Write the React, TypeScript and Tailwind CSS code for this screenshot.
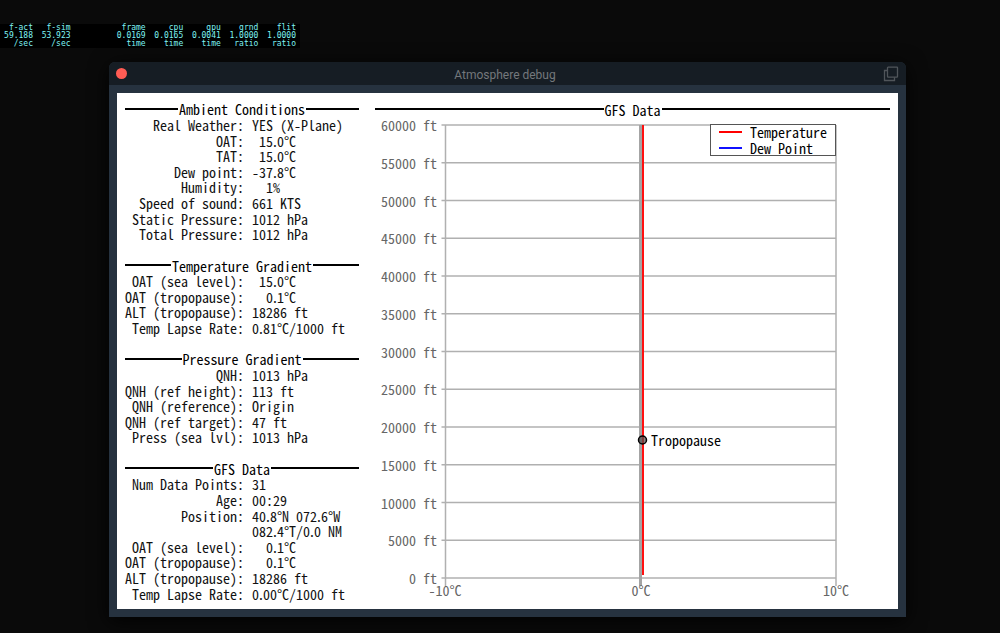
import { Fragment } from 'react';

type Row = [label: string, value: string];

interface Section {
  title: string;
  rows: Row[];
}

const MONO = "font-['Noto_Sans_Mono_CJK_JP','Liberation_Mono',monospace]";

const sections: Section[] = [
  {
    title: 'Ambient Conditions',
    rows: [
      ['Real Weather:', 'YES (X-Plane)'],
      ['OAT:', ' 15.0°C'],
      ['TAT:', ' 15.0°C'],
      ['Dew point:', '-37.8°C'],
      ['Humidity:', '  1%'],
      ['Speed of sound:', '661 KTS'],
      ['Static Pressure:', '1012 hPa'],
      ['Total Pressure:', '1012 hPa'],
    ],
  },
  {
    title: 'Temperature Gradient',
    rows: [
      ['OAT (sea level):', ' 15.0°C'],
      ['OAT (tropopause):', '  0.1°C'],
      ['ALT (tropopause):', '18286 ft'],
      ['Temp Lapse Rate:', '0.81°C/1000 ft'],
    ],
  },
  {
    title: 'Pressure Gradient',
    rows: [
      ['QNH:', '1013 hPa'],
      ['QNH (ref height):', '113 ft'],
      ['QNH (reference):', 'Origin'],
      ['QNH (ref target):', '47 ft'],
      ['Press (sea lvl):', '1013 hPa'],
    ],
  },
  {
    title: 'GFS Data',
    rows: [
      ['Num Data Points:', '31'],
      ['Age:', '00:29'],
      ['Position:', '40.8°N 072.6°W'],
      ['', '082.4°T/0.0 NM'],
      ['OAT (sea level):', '  0.1°C'],
      ['OAT (tropopause):', '  0.1°C'],
      ['ALT (tropopause):', '18286 ft'],
      ['Temp Lapse Rate:', '0.00°C/1000 ft'],
    ],
  },
];

const counters = [
  ['f-act', '59.188', '/sec'],
  ['f-sim', '53.923', '/sec'],
  ['', '', ''],
  ['frame', '0.0169', 'time'],
  ['cpu', '0.0165', 'time'],
  ['gpu', '0.0041', 'time'],
  ['grnd', '1.0000', 'ratio'],
  ['flit', '1.0000', 'ratio'],
];

function FrameCounters() {
  return (
    <div className="w-[300px] bg-black pr-1">
      <table className="w-full table-fixed border-collapse text-right font-['DejaVu_Sans_Mono',monospace] text-[8px] leading-[8px] text-[#7ff4f4]">
        <thead>
          <tr>
            {counters.map((c, i) => (
              <th key={i} className="p-0 font-normal first:w-[33px]">{c[0]}</th>
            ))}
          </tr>
        </thead>
        <tbody>
          {[1, 2].map((r) => (
            <tr key={r}>
              {counters.map((c, i) => (
                <td key={i} className="p-0">{c[r]}</td>
              ))}
            </tr>
          ))}
        </tbody>
      </table>
    </div>
  );
}

function Heading({ children }: { children: string }) {
  return (
    <h2 className="flex items-center text-black">
      <span className="mb-0.5 h-[2px] flex-1 bg-black" />
      <span className="px-px">{children}</span>
      <span className="mb-0.5 h-[2px] flex-1 bg-black" />
    </h2>
  );
}

// The decimal point is set in the proportional face, half a cell wide.
function Value({ text }: { text: string }) {
  return (
    <>
      {text.split('.').map((part, i) => (
        <Fragment key={i}>
          {i > 0 && <span className="font-['Noto_Sans_CJK_JP',sans-serif]">.</span>}
          {part}
        </Fragment>
      ))}
    </>
  );
}

function Readouts() {
  return (
    <div className="grid auto-rows-fr leading-[15px]">
      {sections.map((s, i) => (
        <Fragment key={i}>
          {i > 0 && <div />}
          <Heading>{s.title}</Heading>
          {s.rows.map(([label, value], j) => (
            <div key={j} className="flex items-center gap-2 whitespace-pre">
              <span className="w-[119px] text-right">{label}</span>
              <span><Value text={value} /></span>
            </div>
          ))}
        </Fragment>
      ))}
    </div>
  );
}

const TOP = 7;
const BOTTOM = 460;
const LEFT = 70.5;
const RIGHT = 461;
const altitudes = Array.from({ length: 13 }, (_, i) => i * 5000);

function altitudeY(ft: number) {
  return BOTTOM - (ft / 60000) * (BOTTOM - TOP);
}

function Chart() {
  return (
    <svg viewBox="0 0 515 484" className="h-full w-full" role="img" aria-label="GFS Data">
      <g stroke="#b0b0b0" strokeWidth="1.5">
        {altitudes.map((ft) => (
          <line key={ft} x1={LEFT - 4} x2={RIGHT} y1={altitudeY(ft)} y2={altitudeY(ft)} />
        ))}
        <line x1={LEFT} x2={LEFT} y1={TOP} y2={BOTTOM + 8} />
        <line x1={RIGHT} x2={RIGHT} y1={TOP} y2={BOTTOM + 8} />
        <line x1="265.5" x2="265.5" y1={TOP} y2={BOTTOM + 8} stroke="#a4a4a4" strokeWidth="3" />
      </g>
      <g fill="#666666" textAnchor="end">
        {altitudes.map((ft) => (
          <text key={ft} x="62" y={altitudeY(ft) + 6}>{ft} ft</text>
        ))}
      </g>
      <g fill="#666666" textAnchor="middle">
        <text x="70" y="478">-10°C</text>
        <text x="266" y="478">0°C</text>
        <text x="461" y="478">10°C</text>
      </g>
      <line x1="268" x2="268" y1={TOP} y2="457" stroke="#ff1010" strokeWidth="2" />
      <circle cx="267.5" cy="322" r="4" fill="#505050" fillOpacity="0.7" stroke="#000000" strokeWidth="1.5" />
      <text x="276" y="328">Tropopause</text>
      <rect x="335.5" y="6.5" width="125" height="31" fill="#ffffff" stroke="#555555" />
      <line x1="344" x2="367" y1="14" y2="14" stroke="#ff0000" strokeWidth="2" />
      <line x1="344" x2="367" y1="30" y2="30" stroke="#1010ff" strokeWidth="2" />
      <text x="375" y="20">Temperature</text>
      <text x="375" y="36">Dew Point</text>
    </svg>
  );
}

export default function App() {
  return (
    <main className="flex min-h-screen flex-col bg-[#0a0a0a] pt-6 pb-4">
      <FrameCounters />
      <section className="mt-[14px] mr-[94px] ml-[109px] flex flex-1 flex-col rounded-t-md bg-[#26323f] shadow-[0_4px_20px_rgba(0,0,0,0.9)]">
        <header className="flex h-[23px] items-center justify-between rounded-t-md bg-[#161d24] pr-[7px] pl-[7px]">
          <button aria-label="Close" className="size-[11px] rounded-full bg-[#ff5c54]" />
          <h1 className="pt-0.5 font-[Roboto,sans-serif] text-[12px] leading-4 text-[#74787c]">Atmosphere debug</h1>
          <button aria-label="Pop out">
            <svg viewBox="0 0 16 16" className="size-4" fill="none" stroke="#50555a" strokeWidth="1.3">
              <rect x="4.5" y="1.2" width="10" height="10" rx="0.6" />
              <path d="M4.5 4.5H1.5v10h10v-3.3" />
            </svg>
          </button>
        </header>
        <div className="flex flex-1 p-2">
          <div className={`${MONO} grid flex-1 grid-cols-[234px_1fr] gap-4 bg-white px-2 pt-[9px] pb-[7px] text-[14px] leading-4 text-[#111111]`}>
            <Readouts />
            <div className="flex flex-col">
              <Heading>GFS Data</Heading>
              <div className="min-h-0 flex-1">
                <Chart />
              </div>
            </div>
          </div>
        </div>
      </section>
    </main>
  );
}
